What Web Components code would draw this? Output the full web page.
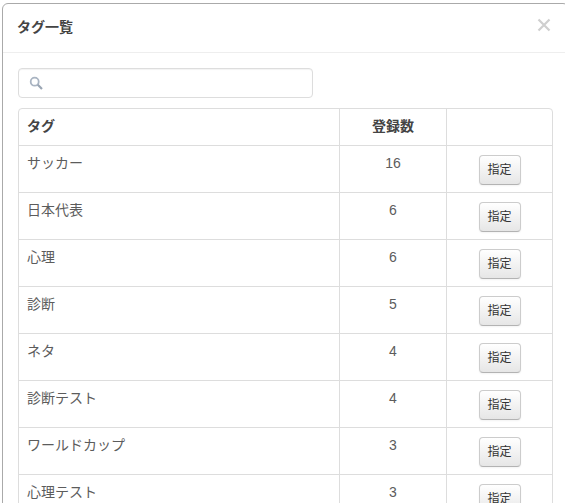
<!DOCTYPE html>
<html lang="ja">
<head>
<meta charset="utf-8">
<title>タグ一覧</title>
<style>
	html, body { height: 100%; margin: 0; overflow: hidden; }
	body {
		background: #fff;
		color: #5c5c5c;
		font: 14px/20px "Liberation Sans", "Noto Sans CJK JP", sans-serif;
	}
</style>
</head>
<body>
<tag-modal heading="タグ一覧">
	<search-box></search-box>
	<tag-table>
		<tag-row name="サッカー" count="16"></tag-row>
		<tag-row name="日本代表" count="6"></tag-row>
		<tag-row name="心理" count="6"></tag-row>
		<tag-row name="診断" count="5"></tag-row>
		<tag-row name="ネタ" count="4"></tag-row>
		<tag-row name="診断テスト" count="4"></tag-row>
		<tag-row name="ワールドカップ" count="3"></tag-row>
		<tag-row name="心理テスト" count="3"></tag-row>
	</tag-table>
</tag-modal>

<script>
class TagModal extends HTMLElement {
	constructor() {
		super();
		this.attachShadow({mode: 'open'}).innerHTML = `
		<style>
			:host {
				background: #fff;
				border: 1px solid #aaa;
				border-radius: 6px;
				box-sizing: border-box;
				display: block;
				margin: 3px 0 0 2px;
				width: 567px;
			}
			header {
				align-items: center;
				border-bottom: 1px solid #eee;
				display: flex;
				height: 48px;
				justify-content: space-between;
				padding: 0 17px 0 14px;
			}
			h3 { color: #444; font-size: 14px; font-weight: bold; margin: 0 0 2px; }
			svg { display: block; margin-bottom: 7px; }
			main { display: block; padding: 15px; }
		</style>
		<header>
			<h3></h3>
			<svg width="14" height="14" viewBox="0 0 14 14" fill="none" stroke="#cfcfcf" stroke-width="2.2">
				<path d="M1.5 1.5 12.5 12.5M12.5 1.5 1.5 12.5"/>
			</svg>
		</header>
		<main><slot></slot></main>
		`;
		this.shadowRoot.querySelector('h3').textContent = this.getAttribute('heading');
	}
}

class SearchBox extends HTMLElement {
	constructor() {
		super();
		this.attachShadow({mode: 'open'}).innerHTML = `
		<style>
			:host {
				align-items: center;
				background: #fff;
				border: 1px solid #ddd;
				border-radius: 4px;
				box-shadow: inset 0 1px 1px rgba(0, 0, 0, .05);
				box-sizing: border-box;
				display: flex;
				height: 30px;
				margin-bottom: 10px;
				padding-left: 10px;
				width: 295px;
			}
		</style>
		<svg width="14" height="14" viewBox="0 0 14 14" fill="none" stroke="#a9b4c2">
			<circle cx="5.7" cy="5.7" r="4" stroke-width="1.8"/>
			<path d="M8.8 8.8 13 13" stroke-width="2.2" stroke="#9aa5b3"/>
		</svg>
		`;
	}
}

class TagTable extends HTMLElement {
	constructor() {
		super();
		this.attachShadow({mode: 'open'}).innerHTML = `
		<style>
			:host {
				border: 1px solid #ddd;
				border-radius: 4px;
				box-sizing: border-box;
				display: block;
				width: 535px;
			}
			.head {
				display: grid;
				font-weight: bold;
				grid-template-columns: 320px 107px 1fr;
				height: 36px;
				line-height: 34px;
				color: #444;
			}
			.head div { padding-left: 8px; }
			.head div + div { border-left: 1px solid #ddd; padding-left: 0; text-align: center; }
		</style>
		<div class="head"><div>タグ</div><div>登録数</div><div></div></div>
		<slot></slot>
		`;
	}
}

class TagRow extends HTMLElement {
	constructor() {
		super();
		this.attachShadow({mode: 'open'}).innerHTML = `
		<style>
			:host {
				border-top: 1px solid #ddd;
				display: grid;
				grid-template-columns: 320px 107px 1fr;
				height: 46px;
			}
			div { padding: 7px 8px 0; }
			div + div { border-left: 1px solid #ddd; padding-left: 0; padding-right: 0; text-align: center; }
			button {
				background: linear-gradient(#fff, #e6e6e6);
				border: 1px solid #ccc;
				border-bottom-color: #b3b3b3;
				border-radius: 4px;
				box-shadow: 0 1px 2px rgba(0, 0, 0, .05);
				color: #333;
				font: 12px/20px "Liberation Sans", "Noto Sans CJK JP", sans-serif;
				height: 30px;
				margin-top: 2px;
				padding: 0;
				width: 42px;
			}
		</style>
		<div class="name"></div><div class="count"></div><div><button>指定</button></div>
		`;
		this.shadowRoot.querySelector('.name').textContent = this.getAttribute('name');
		this.shadowRoot.querySelector('.count').textContent = this.getAttribute('count');
	}
}

customElements.define('tag-modal', TagModal);
customElements.define('search-box', SearchBox);
customElements.define('tag-table', TagTable);
customElements.define('tag-row', TagRow);
</script>
</body>
</html>
